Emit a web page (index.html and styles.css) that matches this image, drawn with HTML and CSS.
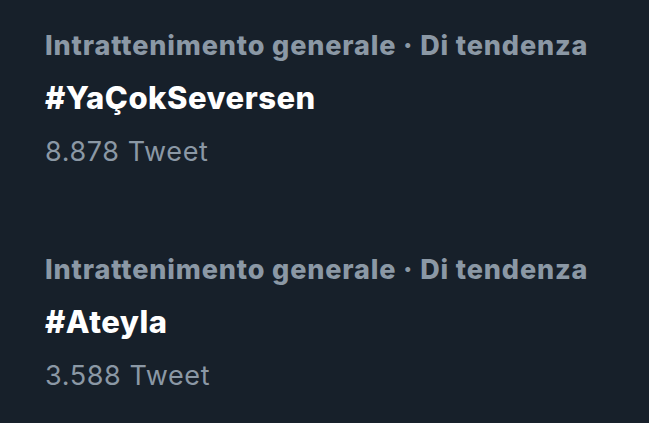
FILE: index.html
```html
<!DOCTYPE html>
<html lang="it">
<head>
<meta charset="utf-8">
<link rel="stylesheet" href="styles.css">
</head>
<body>
<main class="trends">
  <div class="trend">
    <div class="meta">Intrattenimento generale · Di tendenza</div>
    <div class="title">#YaÇokSeversen</div>
    <div class="count">8.878 Tweet</div>
  </div>
  <div class="trend">
    <div class="meta">Intrattenimento generale · Di tendenza</div>
    <div class="title">#Ateyla</div>
    <div class="count">3.588 Tweet</div>
  </div>
</main>
</body>
</html>
```
FILE: styles.css
```css
html, body {
  margin: 0;
  padding: 0;
  background: #17202a;
}
body {
  width: 649px;
  height: 423px;
  overflow: hidden;
  font-family: Inter, Roboto, "Liberation Sans", sans-serif;
}
.trends {
  display: flex;
  flex-direction: column;
  gap: 82px;
  padding: 28px 0 0 45px;
}
.trend {
  display: flex;
  flex-direction: column;
}
.meta {
  color: #8b98a5;
  font-size: 27px;
  font-weight: 800;
  letter-spacing: 0.86px;
  line-height: 36px;
  white-space: nowrap;
}
.title {
  margin-top: 16px;
  color: #ffffff;
  font-size: 31px;
  font-weight: 800;
  letter-spacing: 0.5px;
  line-height: 36px;
  white-space: nowrap;
}
.count {
  margin-top: 18px;
  color: #8b98a5;
  font-size: 27px;
  font-weight: 400;
  letter-spacing: 0.6px;
  line-height: 36px;
  white-space: nowrap;
}
```
